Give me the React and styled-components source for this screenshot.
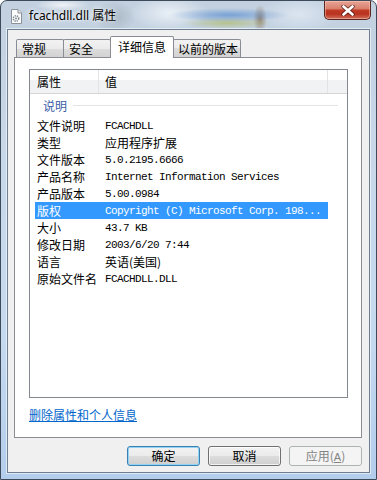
import React from "react";
import styled, { createGlobalStyle } from "styled-components";

const CJK = `"Noto Sans CJK SC", "Noto Sans", sans-serif`;
const MONO = `"Liberation Mono", "Noto Sans CJK SC", monospace`;

const Global = createGlobalStyle`
  html, body { margin: 0; padding: 0; background: #ffffff; }
  body { font-family: ${CJK}; font-size: 12px; color: #000; }
  * { box-sizing: border-box; }
`;

const Window = styled.div`
  width: 377px;
  height: 480px;
  border: 1px solid #3d4a5a;
  border-radius: 7px 7px 0 0;
  padding: 0 6px 6px;
  display: flex;
  flex-direction: column;
  overflow: hidden;
  background:
    radial-gradient(60px 7px at 228px 14px, rgba(70, 130, 205, 0.6), transparent),
    radial-gradient(45px 6px at 226px 22px, rgba(175, 185, 95, 0.65), transparent),
    radial-gradient(7px 14px at 259px 18px, rgba(125, 95, 65, 0.65), transparent),
    radial-gradient(40px 18px at 168px 12px, rgba(240, 245, 250, 0.85), transparent),
    radial-gradient(22px 16px at 113px 16px, rgba(140, 150, 162, 0.45), transparent),
    radial-gradient(28px 6px at 62px 4px, rgba(255, 255, 255, 0.75), transparent),
    radial-gradient(40px 18px at 298px 13px, rgba(228, 236, 246, 0.75), transparent),
    linear-gradient(180deg, #c2d0df 0%, #c8d8e9 30%, #c6daef 70%, #b3cdec 100%);
`;

const TitleBar = styled.div`
  height: 28px;
  margin: 0 -6px;
  padding: 0 5px 0 9px;
  display: flex;
  align-items: flex-start;
  flex: none;
`;

const TitleIcon = styled.svg`
  margin-top: 8px;
  flex: none;
`;

const TitleText = styled.div`
  margin: 6px 0 0 6px;
  line-height: 18px;
  font-family: "Noto Sans", "Noto Sans CJK SC", sans-serif;
  font-size: 12px;
  color: #000;
  text-shadow: 0 0 6px rgba(255, 255, 255, 0.95), 0 0 3px rgba(255, 255, 255, 0.9);
  white-space: nowrap;
`;

const CloseButton = styled.div`
  margin-left: auto;
  width: 47px;
  height: 19px;
  border: 1px solid #5a2620;
  border-top: none;
  border-radius: 0 0 5px 5px;
  background: linear-gradient(180deg, #e7a596 0%, #d9806d 42%, #c03a25 52%, #b9321f 72%, #d2705a 100%);
  box-shadow: inset 0 0 0 1px rgba(255, 210, 200, 0.45);
  display: flex;
  align-items: center;
  justify-content: center;
`;

const Client = styled.div`
  flex: 1;
  display: flex;
  flex-direction: column;
  background: #f0f0f0;
  border: 1px solid #6f7f92;
  box-shadow: 0 0 0 1px rgba(255, 255, 255, 0.55);
  padding: 6px 0 6px 0;
`;

const TabRow = styled.div`
  height: 21px;
  margin-left: 6px;
  padding-left: 2px;
  display: flex;
  align-items: flex-end;
  flex: none;
`;

const Tab = styled.div`
  height: ${(p) => (p.$active ? "22px" : "18px")};
  margin-bottom: ${(p) => (p.$active ? "-1px" : "0")};
  margin-left: ${(p) => (p.$first ? "0" : "-1px")};
  min-width: 48px;
  padding: ${(p) => p.$pad};
  border: 1px solid #898c95;
  border-bottom: ${(p) => (p.$active ? "none" : "0")};
  border-radius: 2px 2px 0 0;
  background: ${(p) =>
    p.$active
      ? "#ffffff"
      : "linear-gradient(180deg, #f2f2f2 0%, #ebebeb 50%, #dddddd 50%, #d2d2d2 100%)"};
  position: relative;
  z-index: ${(p) => (p.$active ? 2 : 1)};
  font-size: 12px;
  line-height: ${(p) => (p.$active ? "19px" : "17px")};
  white-space: nowrap;
`;

const Panel = styled.div`
  height: 381px;
  margin: 0 7px 0 6px;
  border: 1px solid #898c95;
  background: #ffffff;
  padding: 11px 13px 0 14px;
  display: flex;
  flex-direction: column;
  flex: none;
`;

const List = styled.div`
  height: 329px;
  border: 1px solid #828790;
  background: #ffffff;
  display: flex;
  flex-direction: column;
  flex: none;
`;

const Header = styled.div`
  height: 24px;
  display: flex;
  border-bottom: 1px solid #d5d5d5;
  background: linear-gradient(180deg, #ffffff 0%, #ffffff 42%, #f1f2f4 42%, #f1f2f4 100%);
  flex: none;
`;

const HeaderCell = styled.div`
  width: ${(p) => p.$w};
  flex: ${(p) => (p.$grow ? 1 : "none")};
  padding-left: ${(p) => p.$pl || "0"};
  border-right: ${(p) => (p.$grow ? "none" : "1px solid #e2e3e5")};
  line-height: 23px;
  font-size: 12px;
`;

const Group = styled.div`
  height: 23px;
  display: flex;
  align-items: center;
  padding: 0 9px 0 13px;
  flex: none;
`;

const GroupLabel = styled.span`
  color: #3a5ca6;
  font-size: 12px;
  line-height: 16px;
`;

const GroupLine = styled.div`
  flex: 1;
  height: 1px;
  margin-left: 6px;
  background: #e2e4e8;
`;

const Row = styled.div`
  height: 17px;
  width: 293px;
  margin-left: 5px;
  display: flex;
  align-items: center;
  background: ${(p) => (p.$selected ? "#3399ff" : "transparent")};
  color: ${(p) => (p.$selected ? "#ffffff" : "#000000")};
  flex: none;
`;

const Label = styled.div`
  width: 70px;
  padding-left: 2px;
  font-family: ${CJK};
  font-size: 12px;
  line-height: 17px;
  white-space: nowrap;
  flex: none;
`;

const Value = styled.div`
  flex: 1;
  overflow: hidden;
  white-space: nowrap;
  font-family: ${(p) => (p.$cjk ? CJK : MONO)};
  font-size: ${(p) => (p.$cjk ? "12px" : "11px")};
  letter-spacing: ${(p) => (p.$cjk ? "0" : "-0.6px")};
  line-height: 17px;
  padding-top: ${(p) => (p.$cjk ? "0" : "1px")};
`;

const Link = styled.a`
  margin-top: 9px;
  align-self: flex-start;
  color: #0066cc;
  text-decoration: underline;
  font-size: 12px;
  line-height: 16px;
  cursor: pointer;
`;

const ButtonRow = styled.div`
  margin-top: 8px;
  padding-right: 7px;
  display: flex;
  justify-content: flex-end;
  gap: 8px;
  flex: none;
`;

const Button = styled.div`
  width: 73px;
  height: 20px;
  border: 1px solid ${(p) => (p.$default ? "#3c7fb1" : p.$disabled ? "#adb2b5" : "#707070")};
  border-radius: 3px;
  background: ${(p) =>
    p.$disabled
      ? "#f4f4f4"
      : "linear-gradient(180deg, #f2f2f2 0%, #ebebeb 50%, #dddddd 50%, #cfcfcf 100%)"};
  box-shadow: ${(p) =>
    p.$default
      ? "inset 0 0 0 1px #8fd4f5"
      : p.$disabled
      ? "none"
      : "inset 0 0 0 1px rgba(255,255,255,0.75)"};
  color: ${(p) => (p.$disabled ? "#838383" : "#000000")};
  font-size: 12px;
  line-height: 18px;
  text-align: center;
`;

const Mnemonic = styled.span`
  font-family: "Liberation Sans", sans-serif;
  font-size: 11px;
  text-decoration: underline;
`;

const rows = [
  { k: "文件说明", v: "FCACHDLL" },
  { k: "类型", v: "应用程序扩展", cjk: true },
  { k: "文件版本", v: "5.0.2195.6666" },
  { k: "产品名称", v: "Internet Information Services" },
  { k: "产品版本", v: "5.00.0984" },
  { k: "版权", v: "Copyright (C) Microsoft Corp. 198...", selected: true },
  { k: "大小", v: "43.7 KB" },
  { k: "修改日期", v: "2003/6/20 7:44" },
  { k: "语言", v: "英语(美国)", cjk: true },
  { k: "原始文件名", v: "FCACHDLL.DLL" },
];

export default function App() {
  return (
    <>
      <Global />
      <Window>
        <TitleBar>
          <TitleIcon width="13" height="15" viewBox="0 0 13 15">
            <path d="M1.5 0.5h6.5l3.5 3.5v10.5h-10z" fill="#fbfbfb" stroke="#8c9299" />
            <path d="M8 0.5v3.5h3.5" fill="#e6e8eb" stroke="#8c9299" />
            <circle cx="6" cy="9.5" r="2.7" fill="none" stroke="#7f8893" strokeWidth="1.5" strokeDasharray="1.3 0.9" />
            <circle cx="6" cy="9.5" r="1.1" fill="#8e97a2" />
          </TitleIcon>
          <TitleText>fcachdll.dll 属性</TitleText>
          <CloseButton>
            <svg width="14" height="11" viewBox="0 0 14 11">
              <path d="M2.5 1.5L11.5 9.5M11.5 1.5L2.5 9.5" stroke="rgba(70,25,20,0.7)" strokeWidth="4.4" strokeLinecap="round" />
              <path d="M2.5 1.5L11.5 9.5M11.5 1.5L2.5 9.5" stroke="#ffffff" strokeWidth="2.6" strokeLinecap="round" />
            </svg>
          </CloseButton>
        </TitleBar>
        <Client>
          <TabRow>
            <Tab $first $pad="0 5px">常规</Tab>
            <Tab $pad="0 5px">安全</Tab>
            <Tab $active $pad="0 7px">详细信息</Tab>
            <Tab $pad="0 2px 0 4px">以前的版本</Tab>
          </TabRow>
          <Panel>
            <List>
              <Header>
                <HeaderCell $w="69px" $pl="7px">属性</HeaderCell>
                <HeaderCell $w="229px" $pl="6px">值</HeaderCell>
                <HeaderCell $grow />
              </Header>
              <Group>
                <GroupLabel>说明</GroupLabel>
                <GroupLine />
              </Group>
              {rows.map((r) => (
                <Row key={r.k} $selected={r.selected}>
                  <Label>{r.k}</Label>
                  <Value $cjk={r.cjk}>{r.v}</Value>
                </Row>
              ))}
            </List>
            <Link>删除属性和个人信息</Link>
          </Panel>
          <ButtonRow>
            <Button $default>确定</Button>
            <Button>取消</Button>
            <Button $disabled>
              应用(<Mnemonic>A</Mnemonic>)
            </Button>
          </ButtonRow>
        </Client>
      </Window>
    </>
  );
}
